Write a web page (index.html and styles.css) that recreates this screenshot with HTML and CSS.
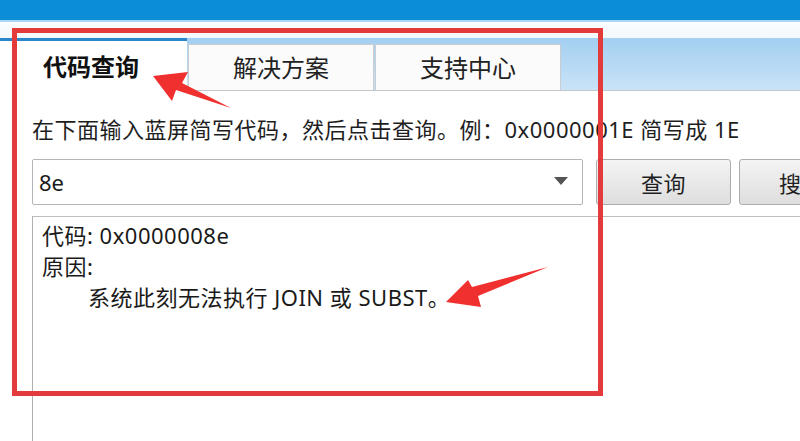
FILE: index.html
```html
<!DOCTYPE html>
<html lang="zh-CN">
<head>
<meta charset="utf-8">
<title>蓝屏代码查询</title>
<link rel="stylesheet" href="styles.css">
</head>
<body>
<div class="window">
  <div class="titlebar"></div>
  <div class="gap"></div>
  <div class="tabstrip">
    <div class="tab active">代码查询</div>
    <div class="tab">解决方案</div>
    <div class="tab">支持中心</div>
  </div>
  <div class="content">
    <p class="hint">在下面输入蓝屏简写代码，然后点击查询。例：0x0000001E 简写成 1E</p>
    <div class="row">
      <div class="combo">
        <span class="combo-value">8e</span>
        <span class="combo-arrow"></span>
      </div>
      <button class="btn">查询</button>
      <button class="btn btn-cut">搜</button>
    </div>
    <div class="result">
      <div class="line">代码: 0x0000008e</div>
      <div class="line">原因:</div>
      <div class="line indent">系统此刻无法执行 JOIN 或 SUBST。</div>
    </div>
  </div>
  <div class="mark-box"></div>
  <svg class="mark-arrows" width="800" height="441" viewBox="0 0 800 441">
    <polygon points="153,76 188,72 182,83 231,108 176,90 172,101"/>
    <polygon points="446,302 468,280 472,287 548,267 478,296 481,307"/>
  </svg>
</div>
</body>
</html>
```
FILE: styles.css
```css
html, body {
  margin: 0;
  padding: 0;
  background: #ffffff;
}

body {
  font-family: "Noto Sans", "Noto Sans CJK SC", sans-serif;
  color: #1a1a1a;
  overflow: hidden;
}

.window {
  position: relative;
  width: 800px;
  height: 441px;
  overflow: hidden;
}

.titlebar {
  height: 20px;
  background: #0c8ed6;
  border-bottom: 2px solid #a9d6f1;
}

.gap {
  height: 16px;
  background: linear-gradient(#fbfdff, #f2f8fd);
}

.tabstrip {
  display: flex;
  align-items: flex-start;
  height: 52px;
  background: linear-gradient(#a3cff1, #c9e3f7);
  border-bottom: 1px solid #c3c7cc;
}

.tab {
  box-sizing: border-box;
  flex-shrink: 0;
  width: 186px;
  height: 46px;
  margin-top: 6px;
  margin-right: 1px;
  border: 1px solid #c9ccd0;
  border-bottom: none;
  background: #fbfbfb;
  font-size: 24px;
  line-height: 46px;
  text-align: center;
  color: #222;
}

.tab.active {
  width: 187px;
  height: 53px;
  margin-top: 0;
  border: none;
  border-top: 3px solid #2c86cb;
  background: #ffffff;
  font-weight: bold;
  text-align: left;
  padding-left: 43px;
  line-height: 52px;
  color: #111;
}

.content {
  padding-left: 32px;
}

.hint {
  margin: 23px 0 0 0;
  font-size: 22px;
  letter-spacing: 0.5px;
  line-height: 30px;
  white-space: nowrap;
  color: #1e1e1e;
}

.row {
  display: flex;
  margin-top: 15px;
  height: 46px;
}

.combo {
  box-sizing: border-box;
  flex-shrink: 0;
  width: 551px;
  height: 46px;
  border: 1px solid #b3b5ba;
  border-radius: 2px;
  background: #fff;
  display: flex;
  align-items: center;
  justify-content: space-between;
  padding: 0 14px 0 6px;
}

.combo-value {
  font-size: 22px;
  color: #1a1a1a;
}

.combo-arrow {
  width: 0;
  height: 0;
  margin-top: -2px;
  border-left: 7px solid transparent;
  border-right: 7px solid transparent;
  border-top: 8px solid #555;
}

.btn {
  box-sizing: border-box;
  flex-shrink: 0;
  width: 135px;
  height: 46px;
  margin-left: 13px;
  border: 1px solid #adadad;
  border-radius: 3px;
  background: linear-gradient(#f4f4f4, #dedede);
  font-family: inherit;
  font-size: 22px;
  letter-spacing: 0.5px;
  color: #1f1f1f;
  padding: 0;
}

.btn-cut {
  margin-left: 8px;
  width: 100px;
  text-align: left;
  padding-left: 39px;
}

.result {
  margin-top: 11px;
  height: 300px;
  border-top: 1px solid #bdbdbd;
  border-left: 1px solid #b0b0b0;
  padding: 3px 0 0 9px;
}

.line {
  font-size: 22px;
  letter-spacing: 0.5px;
  line-height: 31px;
  white-space: nowrap;
  color: #1a1a1a;
}

.indent {
  padding-left: 46px;
}

.mark-box {
  position: absolute;
  left: 12px;
  top: 28px;
  width: 581px;
  height: 358px;
  border: 5px solid #e33a3c;
  pointer-events: none;
}

.mark-arrows {
  position: absolute;
  left: 0;
  top: 0;
  pointer-events: none;
}

.mark-arrows polygon {
  fill: #f0302e;
}
```
